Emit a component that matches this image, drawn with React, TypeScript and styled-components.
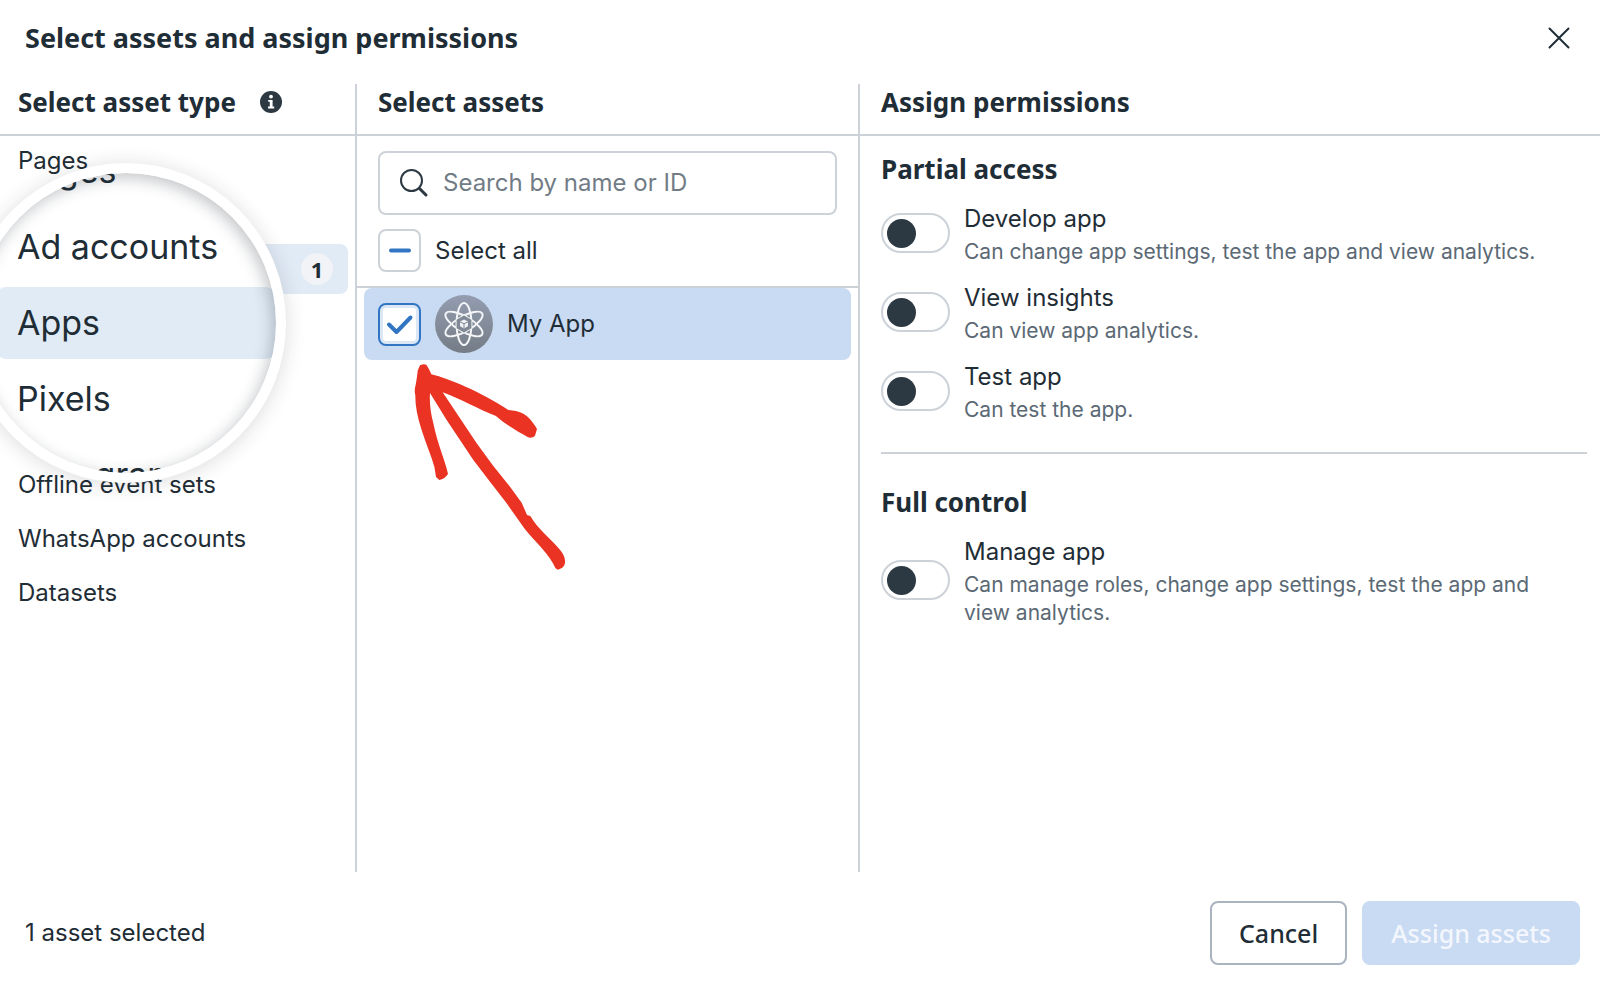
import React, { useState } from "react";
import styled, { createGlobalStyle } from "styled-components";

const ink = "#1f2d36";
const line = "#cdd2d8";
const blue = "#3276c3";
const paleBlue = "#c9daf3";
const display = '"Noto Sans", "Open Sans", sans-serif';
const body = 'Inter, "Liberation Sans", sans-serif';

const GlobalStyle = createGlobalStyle`
  *, *::before, *::after { box-sizing: border-box; }
  body { margin: 0; background: #fff; color: ${ink}; font: 400 24px/30px ${body}; }
  button, input { font: inherit; color: inherit; }
`;

const Dialog = styled.main`
  display: flex;
  flex-direction: column;
  min-height: 100vh;
  overflow: hidden;
`;

const TitleBar = styled.header`
  display: flex;
  align-items: center;
  justify-content: space-between;
  height: 84px;
  padding: 0 25px 8px;
`;

const Title = styled.h1`
  margin: 0;
  font: 700 27px/36px ${display};
`;

const CloseButton = styled.button`
  display: grid;
  place-items: center;
  width: 32px;
  height: 32px;
  padding: 0;
  border: 0;
  background: none;
`;

const Columns = styled.div`
  display: grid;
  grid-template-columns: 357fr 503fr 740fr;
  flex: 1;
`;

const Column = styled.section`
  position: relative;
  min-width: 0;
  & + & > * { padding-left: 21px; }
  &:not(:last-child) { border-right: 2px solid ${line}; }
`;

const ColumnHeader = styled.div`
  display: flex;
  align-items: center;
  gap: 24px;
  height: 52px;
  padding: 0 18px 14px;
  border-bottom: 2px solid ${line};
`;

const Heading = styled.h2`
  margin: 0;
  font: 700 26px/36px ${display};
`;

const InfoButton = styled.button`
  display: flex;
  padding: 0;
  border: 0;
  background: none;
`;

const TypeList = styled.ul`
  display: flex;
  flex-direction: column;
  gap: 4px;
  margin: 0;
  padding: 0 7px 0 0;
  list-style: none;
`;

const TypeRow = styled.li<{ $active?: boolean }>`
  display: flex;
  align-items: center;
  justify-content: flex-end;
  height: 50px;
  padding-right: 15px;
  border-radius: 8px;
  background: ${(p) => (p.$active ? "#e1ebf6" : "transparent")};
`;

const TypeButton = styled.button`
  flex: 1;
  padding: 0 0 0 18px;
  border: 0;
  background: none;
  text-align: left;
`;

const Count = styled.span`
  display: grid;
  place-items: center;
  width: 32px;
  height: 32px;
  border-radius: 50%;
  background: #f1f3f6;
  font: 700 22px/32px ${display};
`;

const Lens = styled.div`
  position: absolute;
  top: 79px;
  left: -34px;
  width: 320px;
  height: 320px;
  border: 10px solid #fff;
  border-radius: 50%;
  background: #fff;
  overflow: hidden;
  box-shadow: 0 2px 20px rgba(30, 40, 50, 0.16);
  &::after {
    content: "";
    position: absolute;
    inset: 0;
    border-radius: 50%;
    box-shadow: inset -3px 4px 16px rgba(30, 40, 50, 0.28);
    pointer-events: none;
  }
`;

const LensList = styled.ul`
  display: flex;
  flex-direction: column;
  gap: 4px;
  margin: -38px 0 0 20px;
  padding: 0;
  list-style: none;
`;

const LensItem = styled.li<{ $active?: boolean }>`
  display: flex;
  align-items: center;
  height: 72px;
  border-radius: 10px;
  background: ${(p) => (p.$active ? "#e1ebf6" : "transparent")};
`;

const LensButton = styled.button`
  padding: 0 0 0 21px;
  border: 0;
  background: none;
  font-size: 34px;
  line-height: 42px;
  white-space: nowrap;
`;

const AssetTools = styled.div`
  display: flex;
  flex-direction: column;
  gap: 14px;
  padding: 15px 21px 14px;
  border-bottom: 2px solid ${line};
`;

const SearchBox = styled.label`
  display: flex;
  align-items: center;
  gap: 14px;
  height: 64px;
  padding: 0 19px;
  border: 2px solid ${line};
  border-radius: 8px;
  svg { flex: none; }
`;

const SearchInput = styled.input`
  flex: 1;
  min-width: 0;
  padding: 0;
  border: 0;
  outline: 0;
  background: none;
  &::placeholder { color: #717c86; opacity: 1; }
`;

const CheckRow = styled.label`
  display: flex;
  align-items: center;
  gap: 14px;
`;

const Tick = styled.span`
  display: grid;
  width: 43px;
  height: 43px;
  > * { grid-area: 1 / 1; }
  svg { pointer-events: none; }
`;

const TickInput = styled.input<{ $strong?: boolean }>`
  appearance: none;
  width: 43px;
  height: 43px;
  margin: 0;
  border: 2px solid ${(p) => (p.$strong ? blue : line)};
  border-radius: 8px;
  background: #fff;
  box-shadow: ${(p) => (p.$strong ? "inset 0 0 0 3px #dbe7f5" : "none")};
`;

const AssetList = styled.ul`
  margin: 0;
  padding: 0 7px;
  list-style: none;
  && { padding-left: 7px; }
`;

const AssetRow = styled.li`
  display: flex;
  align-items: center;
  height: 72px;
  padding: 0 14px;
  border-radius: 8px;
  background: ${paleBlue};
`;

const ArrowMark = styled.svg`
  position: absolute;
  top: 266px;
  left: 33px;
  width: 200px;
  height: 230px;
  && { padding: 0; }
  pointer-events: none;
`;

const Permissions = styled.div`
  padding: 15px 13px 0 21px;
`;

const Group = styled.section`
  display: flex;
  flex-direction: column;
  gap: 17px;
  & + & {
    margin-top: 28px;
    padding-top: 30px;
    border-top: 2px solid ${line};
  }
`;

const GroupTitle = styled.h3`
  margin: 0;
  font: 700 26px/36px ${display};
`;

const Permission = styled.label`
  display: flex;
  align-items: center;
  gap: 14px;
`;

const Switch = styled.input`
  flex: none;
  appearance: none;
  display: flex;
  align-items: center;
  width: 69px;
  height: 40px;
  margin: 0 0 4px;
  padding: 0 4px;
  border: 2px solid ${line};
  border-radius: 20px;
  background: #fff;
  &::before {
    content: "";
    width: 29px;
    height: 29px;
    border-radius: 50%;
    background: #2d3942;
  }
  &:checked { justify-content: flex-end; }
`;

const PermissionText = styled.span`
  display: flex;
  flex-direction: column;
  gap: 4px;
  padding-right: 14px;
`;

const Detail = styled.span`
  color: #5b6975;
  font-size: 21px;
  line-height: 28px;
`;

const Footer = styled.footer`
  display: flex;
  align-items: center;
  gap: 15px;
  height: 115px;
  padding: 6px 20px 0 25px;
`;

const Status = styled.p`
  flex: 1;
  margin: 0;
`;

const ActionButton = styled.button<{ $primary?: boolean }>`
  height: 64px;
  padding: 0 27px;
  border: 2px solid ${(p) => (p.$primary ? paleBlue : "#a9b4c0")};
  border-radius: 8px;
  background: ${(p) => (p.$primary ? paleBlue : "#fff")};
  color: ${(p) => (p.$primary ? "#f3f7fd" : ink)};
  font: 500 25px/34px ${display};
`;

const TickBox = ({ checked, mixed }: { checked?: boolean; mixed?: boolean }) => {
  const [on, setOn] = useState(!!checked);
  return (
    <Tick>
      <TickInput
        type="checkbox"
        $strong={!mixed}
        checked={on}
        onChange={(e) => setOn(e.target.checked)}
        ref={(el: HTMLInputElement | null) => {
          if (el) el.indeterminate = !!mixed;
        }}
      />
      <svg width="43" height="43" fill="none" stroke={blue} strokeWidth="4" strokeLinecap="round" strokeLinejoin="round">
        {mixed && <path d="M13 21.5h18" />}
        {!mixed && on && <path d="M11 21.5l7.5 7.5 14-14.5" />}
      </svg>
    </Tick>
  );
};

const AtomAvatar = () => (
  <svg width="58" height="58" viewBox="0 0 58 58" fill="none" aria-hidden="true">
    <defs>
      <linearGradient id="atom" x1="0" y1="0" x2="0" y2="1">
        <stop offset="0" stopColor="#949db0" />
        <stop offset="1" stopColor="#747c86" />
      </linearGradient>
    </defs>
    <circle cx="29" cy="29" r="29" fill="url(#atom)" />
    <g stroke="#f3f5f7" strokeWidth="2">
      <ellipse cx="29" cy="29" rx="7.5" ry="21" />
      <ellipse cx="29" cy="29" rx="7.5" ry="21" transform="rotate(60 29 29)" />
      <ellipse cx="29" cy="29" rx="7.5" ry="21" transform="rotate(-60 29 29)" />
    </g>
    <path d="M29 20.5l7.4 4.2v8.6L29 37.5l-7.4-4.2v-8.6z" fill="#808895" />
    <path d="M29 24.6l4 2v4.6l-4 2.2-4-2.2v-4.6z" fill="#eef0f3" />
    <path d="M25 26.8l4 2 4-2M29 28.8v4.6" stroke="#808895" strokeWidth="1" />
  </svg>
);

const PermissionRow = ({ name, detail }: { name: string; detail: string }) => (
  <Permission>
    <Switch type="checkbox" role="switch" />
    <PermissionText>
      <span>{name}</span>
      <Detail>{detail}</Detail>
    </PermissionText>
  </Permission>
);

const lensTypes = ["Pages", "Ad accounts", "Apps", "Pixels", "Instagram accounts"];
const laterTypes = ["Offline event sets", "WhatsApp accounts", "Datasets"];

export default function App() {
  return (
    <>
      <GlobalStyle />
      <Dialog>
        <TitleBar>
          <Title>Select assets and assign permissions</Title>
          <CloseButton aria-label="Close">
            <svg width="22" height="22" stroke={ink} strokeWidth="2" strokeLinecap="round">
              <path d="M1.5 1.5l19 19M20.5 1.5l-19 19" />
            </svg>
          </CloseButton>
        </TitleBar>

        <Columns>
          <Column>
            <ColumnHeader>
              <Heading>Select asset type</Heading>
              <InfoButton aria-label="About asset types">
                <svg width="22" height="22" viewBox="0 0 22 22">
                  <circle cx="11" cy="11" r="11" fill="#2d3942" />
                  <circle cx="11" cy="5.6" r="1.9" fill="#fff" />
                  <path d="M8.2 9h4.4v6.6h1.6v1.8H8v-1.8h1.8v-4.8H8.2z" fill="#fff" />
                </svg>
              </InfoButton>
            </ColumnHeader>
            <TypeList>
              <TypeRow>
                <TypeButton>Pages</TypeButton>
              </TypeRow>
              <TypeRow />
              <TypeRow $active>
                <Count>1</Count>
              </TypeRow>
              <TypeRow />
              <TypeRow />
              <TypeRow />
              {laterTypes.map((t) => (
                <TypeRow key={t}>
                  <TypeButton>{t}</TypeButton>
                </TypeRow>
              ))}
            </TypeList>
            <Lens>
              <LensList>
                {lensTypes.map((t) => (
                  <LensItem key={t} $active={t === "Apps"}>
                    <LensButton>{t}</LensButton>
                  </LensItem>
                ))}
              </LensList>
            </Lens>
          </Column>

          <Column>
            <ColumnHeader>
              <Heading>Select assets</Heading>
            </ColumnHeader>
            <AssetTools>
              <SearchBox>
                <svg width="30" height="30" fill="none" stroke="#2d3942" strokeLinecap="round">
                  <circle cx="12.5" cy="12.5" r="10.5" strokeWidth="2" />
                  <path d="M20.5 20.5l6.5 6.5" strokeWidth="3" />
                </svg>
                <SearchInput type="search" placeholder="Search by name or ID" aria-label="Search by name or ID" />
              </SearchBox>
              <CheckRow>
                <TickBox mixed />
                <span>Select all</span>
              </CheckRow>
            </AssetTools>
            <AssetList>
              <AssetRow>
                <CheckRow>
                  <TickBox checked />
                  <AtomAvatar />
                  <span>My App</span>
                </CheckRow>
              </AssetRow>
            </AssetList>
            <ArrowMark viewBox="0 0 600 690" aria-hidden="true">
              <path
                fill="#ea3323"
                d="M90 46Q101 40 109 44Q117 55 124 73C180 87 270 125 355 180C372 182 385 183 397 190C415 198 430 218 441 237L435 257Q427 266 414 262C380 242 345 223 318 198C265 178 215 148 158 127L210 205L260 280L310 348L360 410L395 458L411 495L421 498C445 540 485 568 511 601Q527 620 525 640Q521 656 503 659L496 654C480 616 440 580 405 538L350 460L300 395L250 330L210 270L170 210L120 129C118 160 122 190 130 220C137 255 147 285 157 315Q169 350 174 372Q163 388 148 390L138 381Q135 350 125 325C105 265 75 200 76 136Q72 120 77 105Q82 75 83 62Z"
              />
            </ArrowMark>
          </Column>

          <Column>
            <ColumnHeader>
              <Heading>Assign permissions</Heading>
            </ColumnHeader>
            <Permissions>
              <Group>
                <GroupTitle>Partial access</GroupTitle>
                <PermissionRow name="Develop app" detail="Can change app settings, test the app and view analytics." />
                <PermissionRow name="View insights" detail="Can view app analytics." />
                <PermissionRow name="Test app" detail="Can test the app." />
              </Group>
              <Group>
                <GroupTitle>Full control</GroupTitle>
                <PermissionRow
                  name="Manage app"
                  detail="Can manage roles, change app settings, test the app and view analytics."
                />
              </Group>
            </Permissions>
          </Column>
        </Columns>

        <Footer>
          <Status>1 asset selected</Status>
          <ActionButton>Cancel</ActionButton>
          <ActionButton $primary disabled>
            Assign assets
          </ActionButton>
        </Footer>
      </Dialog>
    </>
  );
}
